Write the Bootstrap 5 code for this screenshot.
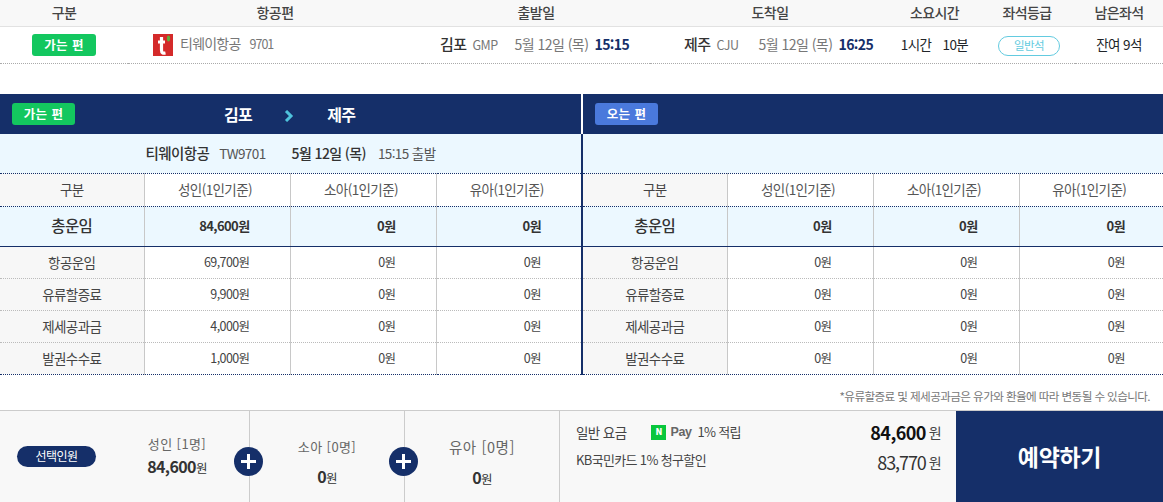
<!DOCTYPE html>
<html lang="ko"><head><meta charset="utf-8"><title>항공권 예약</title>
<link href="https://cdn.jsdelivr.net/npm/bootstrap@5.3.0/dist/css/bootstrap.min.css" rel="stylesheet">
<style>
html,body{height:502px;overflow:hidden}
body{font-family:"Noto Sans CJK KR","Liberation Sans",sans-serif;font-size:13.5px;color:#444;letter-spacing:-.6px;background:#fff}
.navy{background:#152f69}
.sum-table{table-layout:fixed;width:1163px;margin:0}
.sum-table th,.sum-table td{padding:0;vertical-align:middle;text-align:center;border:0;background:transparent;box-shadow:none;color:inherit}
.sum-table thead tr{height:26px;background:#f8f8f8;border-bottom:1px solid #e2e2e2}
.sum-table th{font-weight:500;font-size:14px;color:#444}
.sum-table tbody tr{height:37px;border-bottom:1px dotted #aaa}
.c1{width:128px}.c2{width:294px}.c3{width:228px}.c4{width:240px}.c5{width:89px}.c6{width:96px}.c7{width:88px}
.sum-table td.from{text-align:left;padding-left:18px;white-space:nowrap}
.sum-table td.to{text-align:left;padding-left:34px;white-space:nowrap}
.sum-table td.air{text-align:left;padding-left:25px;color:#777;font-size:14px;letter-spacing:-.8px}
.fno{font-size:12.5px;letter-spacing:-1px;margin-left:9px}
.tag{display:inline-block;width:64px;height:22px;line-height:21px;border-radius:3px;color:#fff;font-size:12.5px;font-weight:700;text-align:center;letter-spacing:.4px}
.band .tag{width:63px}
.tag-go{background:#13c75f}.tag-back{background:#4a79dc}
.city{font-size:15px;font-weight:500;color:#333}
.code{display:inline-block;width:42px;font-size:12.5px;color:#777;margin-left:3px}
.dt{font-size:14px;color:#777;letter-spacing:-.55px}
.tm{font-size:14px;font-weight:700;color:#152f69;margin-left:3px}
.seat{display:inline-block;width:62px;height:20px;line-height:17px;border:1px solid #63cbe0;border-radius:10px;color:#63cbe0;font-size:11.5px;margin-left:4px}
.band{height:40px;margin-top:30px}
.band>div{width:581px;padding-left:12px}
.band>div+div{width:582px;border-left:2px solid #fff;padding-left:12px}
.route{color:#fff;font-size:16px;font-weight:700}
.route .a{margin-left:149px}
.route .ar{margin:0 33px 0 32px}
.info{height:39px;background:#ecf8ff;font-size:14px;color:#333}
.info>div{width:581px}
.info>div+div{width:582px;border-left:2px solid #152f69}
.info b{font-weight:500}
.info .nm{font-size:14.5px}
.info .sub{color:#555;font-size:13.5px}
.info .t1{margin-left:10px}.info .t2{margin-left:26px}.info .t3{margin-left:12px}
.fare{table-layout:fixed;width:1163px;margin:0;border-top:1px dotted #152f69;border-bottom:1px dotted #152f69}
.w144{width:144px}.w145{width:145px}.w146{width:146px}
.fare th,.fare td{padding:0 40px 0 0;text-align:right;vertical-align:middle;border:0;border-right:1px solid #c8c8c8;background:transparent;box-shadow:none;color:#444;font-weight:400;font-size:12.5px}
.fare .lab{text-align:center;padding:0;background:#f7f7f7;font-size:13.5px}
.fare .mid{border-right:2px solid #152f69;padding-right:40px}
.fare .rt{padding-right:41px}
.fare .end{border-right:0;padding-right:38px}
.fare thead th,.fare thead th.mid,.fare thead th.end{text-align:center;padding:0 4px 0 0;height:33px;border-bottom:1px dotted #152f69;color:#555;font-size:13.5px}
.fare thead th.lab{color:#444;padding:0}
.fare .tot td,.fare .tot th{height:40px;background:#ecf8ff;font-weight:700;font-size:13px;color:#333;border-bottom:1px solid #152f69}
.fare .tot .lab{background:#ecf8ff;font-size:15.5px;font-weight:500}
.fare tbody tr.rw td,.fare tbody tr.rw th{height:32px;border-bottom:1px dotted #bbb}
.fare tbody tr.rw:last-child td,.fare tbody tr.rw:last-child th{border-bottom:0}
.note{height:35px;font-size:11.6px;color:#777;padding:13px 13px 0 0;text-align:right}
.foot{height:92px;background:#f8f8f8;border-top:1px solid #ccc}
.seg{position:relative;flex:none;border-right:1px solid #ccc;text-align:center}
.s1{width:250px;padding-left:17px}
.s2,.s3{width:155px}
.pill{display:inline-block;width:79px;height:21px;line-height:20px;border-radius:11px;background:#152f69;color:#fff;font-size:12px;flex:none;text-align:center}
.who{color:#666;font-size:13px;letter-spacing:.4px;white-space:nowrap}
.s3 .who{font-size:14.5px;letter-spacing:.6px}
.amt{font-size:16px;font-weight:700;color:#333}
.amt small{font-size:12.5px;font-weight:400}
.box1{width:128px;margin-left:17px}
.plus{position:absolute;right:-14px;top:36px;width:29px;height:29px;border-radius:50%;background:#152f69;z-index:2}
.stk{padding-top:13px;gap:8px}
.s4{width:396px;padding:5px 15px 0 16px;flex:none;color:#444;font-size:13.5px}
.l1{height:33px}
.np{display:inline-flex;width:15px;height:15px;background:#08c73c;color:#fff;font-size:9px;font-weight:900;align-items:center;justify-content:center;letter-spacing:0;margin:0 4px 0 25px}
.pay{font-weight:700;color:#666;margin-right:6px;font-family:"Liberation Sans",sans-serif;letter-spacing:-.4px;font-size:12.5px}
.pt{font-size:13px;letter-spacing:-.7px}
.kb{font-size:13px;letter-spacing:-.65px;margin-bottom:4px}
.bigp{font-size:18px;font-weight:700;color:#111}
.bigq{font-size:18px;color:#333;letter-spacing:-1.1px}
.won{font-size:14px;margin-left:3px}
.cta{flex:1;background:#152f69;color:#fff;font-size:23px;font-weight:700;border:0;border-radius:0;letter-spacing:-.3px}
</style></head><body>
<table class="table sum-table">
<colgroup><col class="c1"><col class="c2"><col class="c3"><col class="c4"><col class="c5"><col class="c6"><col class="c7"></colgroup>
<thead><tr><th>구분</th><th>항공편</th><th>출발일</th><th>도착일</th><th>소요시간</th><th>좌석등급</th><th>남은좌석</th></tr></thead>
<tbody><tr>
<td><span class="tag tag-go">가는 편</span></td>
<td class="air"><svg width="20" height="22" viewBox="0 0 20 22" class="align-middle me-1"><rect width="20" height="22" fill="#d42a2a"/><path d="M8.500 3v13c0 3 1.500 3.500 4 3M5 8h7" fill="none" stroke="#fff" stroke-width="3.200"/><ellipse cx="15.500" cy="4.500" rx="1.600" ry="3" fill="#5fae3c"/></svg> 티웨이항공<span class="fno">9701</span></td>
<td class="from"><span class="city">김포</span> <span class="code">GMP</span><span class="dt">5월 12일 (목)</span> <span class="tm">15:15</span></td>
<td class="to"><span class="city">제주</span> <span class="code">CJU</span><span class="dt">5월 12일 (목)</span> <span class="tm">16:25</span></td>
<td>1시간 <span class="ms-2">10분</span></td>
<td><span class="seat">일반석</span></td>
<td>잔여 9석</td>
</tr></tbody></table>

<div class="band navy d-flex">
<div class="d-flex align-items-center"><span class="tag tag-go">가는 편</span><span class="route"><span class="a">김포</span><svg class="ar" width="10" height="12" viewBox="0 0 10 12"><path d="M2 1l5 5-5 5" fill="none" stroke="#4fc3dc" stroke-width="3"/></svg><span>제주</span></span></div>
<div class="d-flex align-items-center"><span class="tag tag-back">오는 편</span></div>
</div>
<div class="info d-flex">
<div class="d-flex align-items-center justify-content-center"><b class="nm">티웨이항공</b><span class="sub t1">TW9701</span><b class="t2">5월 12일 (목)</b><span class="sub t3">15:15 출발</span></div>
<div></div>
</div>
<table class="table fare">
<colgroup><col class="w144"><col class="w146"><col class="w146"><col class="w146"><col class="w145"><col class="w146"><col class="w146"><col class="w144"></colgroup>
<thead><tr>
<th class="lab">구분</th><th>성인(1인기준)</th><th>소아(1인기준)</th><th class="mid">유아(1인기준)</th>
<th class="lab">구분</th><th>성인(1인기준)</th><th>소아(1인기준)</th><th class="end">유아(1인기준)</th>
</tr></thead>
<tbody>
<tr class="tot"><th class="lab">총운임</th><td>84,600원</td><td>0원</td><td class="mid">0원</td><th class="lab">총운임</th><td class="rt">0원</td><td class="rt">0원</td><td class="end">0원</td></tr>
<tr class="rw"><th class="lab">항공운임</th><td>69,700원</td><td>0원</td><td class="mid">0원</td><th class="lab">항공운임</th><td class="rt">0원</td><td class="rt">0원</td><td class="end">0원</td></tr>
<tr class="rw"><th class="lab">유류할증료</th><td>9,900원</td><td>0원</td><td class="mid">0원</td><th class="lab">유류할증료</th><td class="rt">0원</td><td class="rt">0원</td><td class="end">0원</td></tr>
<tr class="rw"><th class="lab">제세공과금</th><td>4,000원</td><td>0원</td><td class="mid">0원</td><th class="lab">제세공과금</th><td class="rt">0원</td><td class="rt">0원</td><td class="end">0원</td></tr>
<tr class="rw"><th class="lab">발권수수료</th><td>1,000원</td><td>0원</td><td class="mid">0원</td><th class="lab">발권수수료</th><td class="rt">0원</td><td class="rt">0원</td><td class="end">0원</td></tr>
</tbody></table>
<div class="note">*유류할증료 및 제세공과금은 유가와 환율에 따라 변동될 수 있습니다.</div>
<div class="foot d-flex">
<div class="seg s1 d-flex align-items-center"><span class="pill">선택인원</span>
<div class="box1"><div class="who">성인 [1명]</div><div class="amt">84,600<small>원</small></div></div>
<span class="plus d-flex align-items-center justify-content-center"><svg width="17" height="17" viewBox="0 0 17 17"><path d="M8.500 1v15M1 8.500h15" stroke="#fff" stroke-width="3"/></svg></span></div>
<div class="seg s2 d-flex flex-column justify-content-center stk"><div class="who">소아 [0명]</div><div class="amt">0<small>원</small></div>
<span class="plus d-flex align-items-center justify-content-center"><svg width="17" height="17" viewBox="0 0 17 17"><path d="M8.500 1v15M1 8.500h15" stroke="#fff" stroke-width="3"/></svg></span></div>
<div class="seg s3 d-flex flex-column justify-content-center stk"><div class="who">유아 [0명]</div><div class="amt">0<small>원</small></div></div>
<div class="s4">
<div class="l1 d-flex justify-content-between align-items-center"><div class="d-flex align-items-center"><span>일반 요금</span><span class="np">N</span><span class="pay">Pay</span><span class="pt">1% 적립</span></div><div class="d-flex align-items-center"><span class="bigp">84,600</span><span class="won">원</span></div></div>
<div class="d-flex justify-content-between align-items-center"><span class="kb">KB국민카드 1% 청구할인</span><div class="d-flex align-items-center"><span class="bigq">83,770</span><span class="won">원</span></div></div>
</div>
<button class="btn cta" type="button">예약하기</button>
</div>
<script src="https://cdn.jsdelivr.net/npm/bootstrap@5.3.0/dist/js/bootstrap.bundle.min.js"></script>
</body></html>
